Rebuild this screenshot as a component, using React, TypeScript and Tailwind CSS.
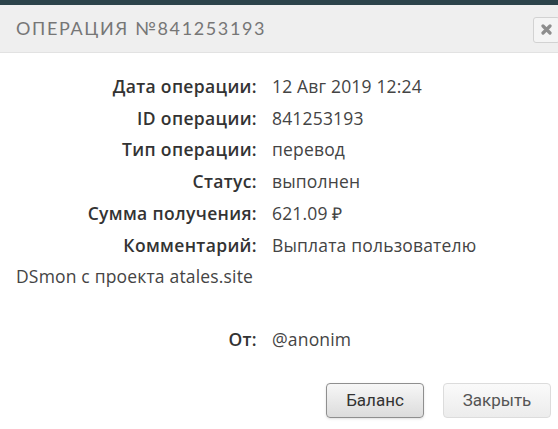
import React from 'react';

const rows = [
  { label: 'Дата операции:', value: '12 Авг 2019 12:24' },
  { label: 'ID операции:', value: '841253193' },
  { label: 'Тип операции:', value: 'перевод' },
  { label: 'Статус:', value: 'выполнен' },
  { label: 'Сумма получения:', value: '621.09 ₽' },
];

const App = () => {
  return (
    <div className="w-[558px] h-[429px] bg-white overflow-hidden font-['Open_Sans','Lato',sans-serif]">
      {/* top strip */}
      <div className="h-[5px] bg-[#2c434a]" />

      {/* header */}
      <div className="h-[48px] bg-[#efefef] border-b border-[#e2e2e2] flex items-center justify-between pl-4">
        <h1 className="font-['Lato',sans-serif] text-[18px] tracking-[0.09em] text-[#767676] uppercase">Операция №841253193</h1>
        <button className="w-[27px] h-[26px] mt-[2px] -mr-[2px] rounded-[3px] border border-[#d2d2d2] bg-[#f4f4f4] flex items-center justify-center">
          <svg width="11" height="11" viewBox="0 0 11 11">
            <path d="M2 2 L9 9 M9 2 L2 9" stroke="#8d8d8d" strokeWidth="3.2" strokeLinecap="round" />
          </svg>
        </button>
      </div>

      {/* body */}
      <div className="pt-[18px] pl-4 pr-[40px] text-[17.5px] leading-[31.7px] text-[#444]">
        {rows.map((row) => (
          <div key={row.label} className="flex">
            <span className="w-[241px] text-right font-semibold tracking-[0.02em] text-[#333]">{row.label}</span>
            <span className="ml-[15px] tracking-[0.01em]">{row.value}</span>
          </div>
        ))}
        <p className="leading-[31px] tracking-[0.01em]">
          <span className="float-left h-[31px] w-[256px] pr-[15px] text-right font-semibold tracking-[0.02em] text-[#333]">Комментарий:</span>
          <span>Выплата пользователю DSmon с проекта atales.site</span>
        </p>

        <div className="flex mt-[32px]">
          <span className="w-[241px] text-right font-semibold tracking-[0.02em] text-[#333]">От:</span>
          <span className="ml-[15px] tracking-[0.01em]">@anonim</span>
        </div>
      </div>

      {/* footer buttons */}
      <div className="flex justify-end gap-[19px] pr-[7px] mt-[28px] font-['Roboto',sans-serif] text-[17px]">
        <button className="w-[98px] h-[35px] rounded-[4px] border border-[#8f8f8f] bg-gradient-to-b from-[#f7f7f7] to-[#dcdcdc] text-[#333] shadow-sm">
          Баланс
        </button>
        <button className="w-[108px] h-[35px] rounded-[4px] border border-[#dcdcdc] bg-gradient-to-b from-[#fafafa] to-[#ececec] text-[#555]">
          Закрыть
        </button>
      </div>
    </div>
  );
};

export default App;
